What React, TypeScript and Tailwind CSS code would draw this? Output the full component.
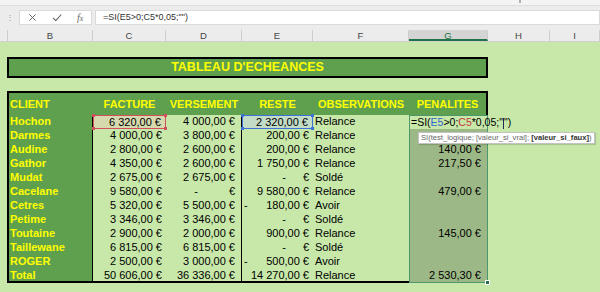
import type { ReactNode } from "react";

const font = "font-['Liberation_Sans',Arial,sans-serif]";

interface Row {
  name: string;
  c: string;
  d: string;
  e: string;
  eNeg?: boolean;
  f: string;
  g: string;
}

const rows: Row[] = [
  { name: "Hochon", c: "6 320,00", d: "4 000,00", e: "2 320,00", f: "Relance", g: "" },
  { name: "Darmes", c: "4 000,00", d: "3 800,00", e: "200,00", f: "Relance", g: "" },
  { name: "Audine", c: "2 800,00", d: "2 600,00", e: "200,00", f: "Relance", g: "140,00 €" },
  { name: "Gathor", c: "4 350,00", d: "2 600,00", e: "1 750,00", f: "Relance", g: "217,50 €" },
  { name: "Mudat", c: "2 675,00", d: "2 675,00", e: "-", f: "Soldé", g: "" },
  { name: "Cacelane", c: "9 580,00", d: "-", e: "9 580,00", f: "Relance", g: "479,00 €" },
  { name: "Cetres", c: "5 320,00", d: "5 500,00", e: "180,00", eNeg: true, f: "Avoir", g: "" },
  { name: "Petime", c: "3 346,00", d: "3 346,00", e: "-", f: "Soldé", g: "" },
  { name: "Toutaine", c: "2 900,00", d: "2 000,00", e: "900,00", f: "Relance", g: "145,00 €" },
  { name: "Taillewane", c: "6 815,00", d: "6 815,00", e: "-", f: "Soldé", g: "" },
  { name: "ROGER", c: "2 500,00", d: "3 000,00", e: "500,00", eNeg: true, f: "Avoir", g: "" },
  { name: "Total", c: "50 606,00", d: "36 336,00", e: "14 270,00", f: "Relance", g: "2 530,30 €" },
];

const Money = ({ v, neg, zeroGap }: { v: string; neg?: boolean; zeroGap: string }) => (
  <div className="flex w-full whitespace-pre">
    {neg && <span className="pl-[2px]">-</span>}
    <span className="flex-1" />
    {v === "-" ? (
      <>
        <span className={zeroGap}>-</span>
        <span>€</span>
      </>
    ) : (
      <span>{v} €</span>
    )}
  </div>
);

const Corners = ({ color }: { color: string }) => (
  <>
    <span className={`absolute -left-[2px] -top-[2px] w-[3px] h-[3px] ${color}`} />
    <span className={`absolute -right-[2px] -top-[2px] w-[3px] h-[3px] ${color}`} />
    <span className={`absolute -left-[2px] -bottom-[2px] w-[3px] h-[3px] ${color}`} />
    <span className={`absolute -right-[2px] -bottom-[2px] w-[3px] h-[3px] ${color}`} />
  </>
);

const FormulaBar = () => (
  <div className="h-[30px] bg-[#ececec] flex flex-col">
    <div className="h-[6px] bg-[#f4f4f4] border-b border-[#dedede] relative">
      <span className="absolute left-[519px] top-0 w-[2px] h-[3px] bg-[#b0b0b0]" />
    </div>
    <div className="flex items-center mt-[4px] h-[15px]">
      <div className="w-[19px] flex justify-center text-[#9a9a9a] text-[8px] leading-none">⋮</div>
      <div className="w-[73px] h-[15px] bg-white border border-[#dadada] flex items-center justify-around text-[#666]">
        <svg width="9" height="9" viewBox="0 0 10 10" fill="none" stroke="currentColor" strokeWidth="1.1">
          <path d="M1.5 1.5 8.5 8.5M8.5 1.5 1.5 8.5" />
        </svg>
        <svg width="10" height="9" viewBox="0 0 10 9" fill="none" stroke="currentColor" strokeWidth="1.1">
          <path d="M1 4.8 3.8 7.6 9.2 1.5" />
        </svg>
        <span className="font-['Liberation_Serif',serif] italic text-[10px] leading-none">
          f<span className="text-[8px]">x</span>
        </span>
      </div>
      <div className="w-[3px]" />
      <div className="flex-1 h-[15px] bg-white border border-[#dadada] flex items-center pl-[7px] text-[9px] text-[#333] whitespace-pre">
        =SI(E5&gt;0;C5*0,05;"")
      </div>
    </div>
  </div>
);

const headerCols = [
  { l: "", w: "w-[8px]" },
  { l: "B", w: "w-[85px]" },
  { l: "C", w: "w-[73px]" },
  { l: "D", w: "w-[76px]" },
  { l: "E", w: "w-[71px]" },
  { l: "F", w: "w-[96px]" },
  { l: "G", w: "w-[79px]" },
  { l: "H", w: "w-[62px]" },
  { l: "I", w: "w-[50px]" },
];

const ColumnHeaders = () => (
  <div className="flex h-[12px] bg-[#ececec] border-b border-[#d0d0d0] text-[9.5px] leading-[11px] text-[#444]">
    {headerCols.map((c) => (
      <div
        key={c.l || "corner"}
        className={`${c.w} shrink-0 border-r border-[#cdcdcd] text-center ${
          c.l === "G" ? "bg-[#d4d4d4] text-[#217346] border-b-2 border-b-[#217346]" : ""
        }`}
      >
        {c.l}
      </div>
    ))}
  </div>
);

const HeaderCell = ({ w, children, extra = "" }: { w: string; children: ReactNode; extra?: string }) => (
  <div className={`${w} shrink-0 flex items-center justify-center border-t-2 border-black ${extra}`}>{children}</div>
);

const DataRow = ({ r, i }: { r: Row; i: number }) => {
  const first = i === 0;
  const last = i === rows.length - 1;
  const bottom = last ? "border-b-2 border-b-black" : "";
  return (
    <div className="flex h-[14px] text-[11px] leading-[13px] text-black">
      <div className="w-[7px] shrink-0" />
      <div className={`w-[86px] shrink-0 bg-[#5fa04f] border-l-2 border-r border-black pl-[1px] font-bold text-[#ffff00] ${bottom}`}>
        {r.name}
      </div>
      <div className={`w-[73px] shrink-0 pr-[4px] relative ${first ? "bg-[#d6d9ae] border border-[#d2505e]" : ""} ${bottom}`}>
        <Money v={r.c} zeroGap="" />
        {first && <Corners color="bg-[#d2505e]" />}
      </div>
      <div className={`w-[76px] shrink-0 pr-[6px] border-r border-black ${bottom}`}>
        <Money v={r.d} zeroGap="mr-[31px]" />
      </div>
      <div className={`w-[71px] shrink-0 pr-[4px] relative ${first ? "bg-[#c3dcc8] border border-[#3d72d6]" : ""} ${bottom}`}>
        <Money v={r.e} neg={r.eNeg} zeroGap="mr-[17px]" />
        {first && <Corners color="bg-[#3d72d6]" />}
      </div>
      <div className={`w-[96px] shrink-0 pl-[2px] ${bottom}`}>{r.f}</div>
      <div
        className={`w-[79px] shrink-0 pr-[6px] text-right border-l border-r border-[#4c9770] relative ${
          first ? "border-t" : "bg-[#9cb886]"
        } ${last ? "border-b" : ""}`}
      >
        {first ? (
          <>
            <div className="absolute left-[1px] top-0 whitespace-pre text-[10.5px] leading-[13px]">
              =SI(<span className="text-[#3564d0]">E5</span>&gt;0;<span className="text-[#c53a3a]">C5</span>
              *0,05;"<span className="inline-block w-[1px] h-[11px] align-middle bg-[#1d2a55]" />")
            </div>
            <div className="absolute left-[8px] top-[16px] z-10 h-[12px] px-[2px] bg-white border border-[#c2c2c2] shadow-[1px_1px_1px_rgba(0,0,0,0.15)] whitespace-pre text-[7.6px] leading-[10px] text-[#666]">
              SI(test_logique; [valeur_si_vrai]; <span className="font-bold text-[#333]">[valeur_si_faux]</span>)
            </div>
          </>
        ) : (
          r.g
        )}
        {last && (
          <span className="absolute -right-[3px] -bottom-[3px] w-[5px] h-[5px] bg-[#217346] border border-white" />
        )}
      </div>
    </div>
  );
};

const Sheet = () => (
  <div className="flex flex-col">
    <div className="h-[15px]" />
    <div className="flex h-[21px]">
      <div className="w-[7px] shrink-0" />
      <div className="w-[481px] shrink-0 bg-[#5fa04f] border-2 border-black flex items-center justify-center text-[12.5px] font-bold text-[#ffff00]">
        TABLEAU D'ECHEANCES
      </div>
    </div>
    <div className="h-[13px]" />
    <div className="flex h-[24px] text-[11px] font-bold text-[#ffff00]">
      <div className="w-[7px] shrink-0" />
      <div className="w-[86px] shrink-0 flex items-center border-t-2 border-l-2 border-black bg-[#5fa04f] pl-[1px]">
        CLIENT
      </div>
      <div className="flex bg-[#5fa04f]">
        <HeaderCell w="w-[73px]">FACTURE</HeaderCell>
        <HeaderCell w="w-[76px]">VERSEMENT</HeaderCell>
        <HeaderCell w="w-[71px]">RESTE</HeaderCell>
        <HeaderCell w="w-[96px]">OBSERVATIONS</HeaderCell>
        <HeaderCell w="w-[79px]" extra="border-r-2">
          PENALITES
        </HeaderCell>
      </div>
    </div>
    {rows.map((r, i) => (
      <DataRow key={r.name} r={r} i={i} />
    ))}
  </div>
);

export default function App() {
  return (
    <div className={`w-[600px] h-[292px] overflow-hidden bg-[#c8e8aa] ${font}`}>
      <FormulaBar />
      <ColumnHeaders />
      <Sheet />
    </div>
  );
}
